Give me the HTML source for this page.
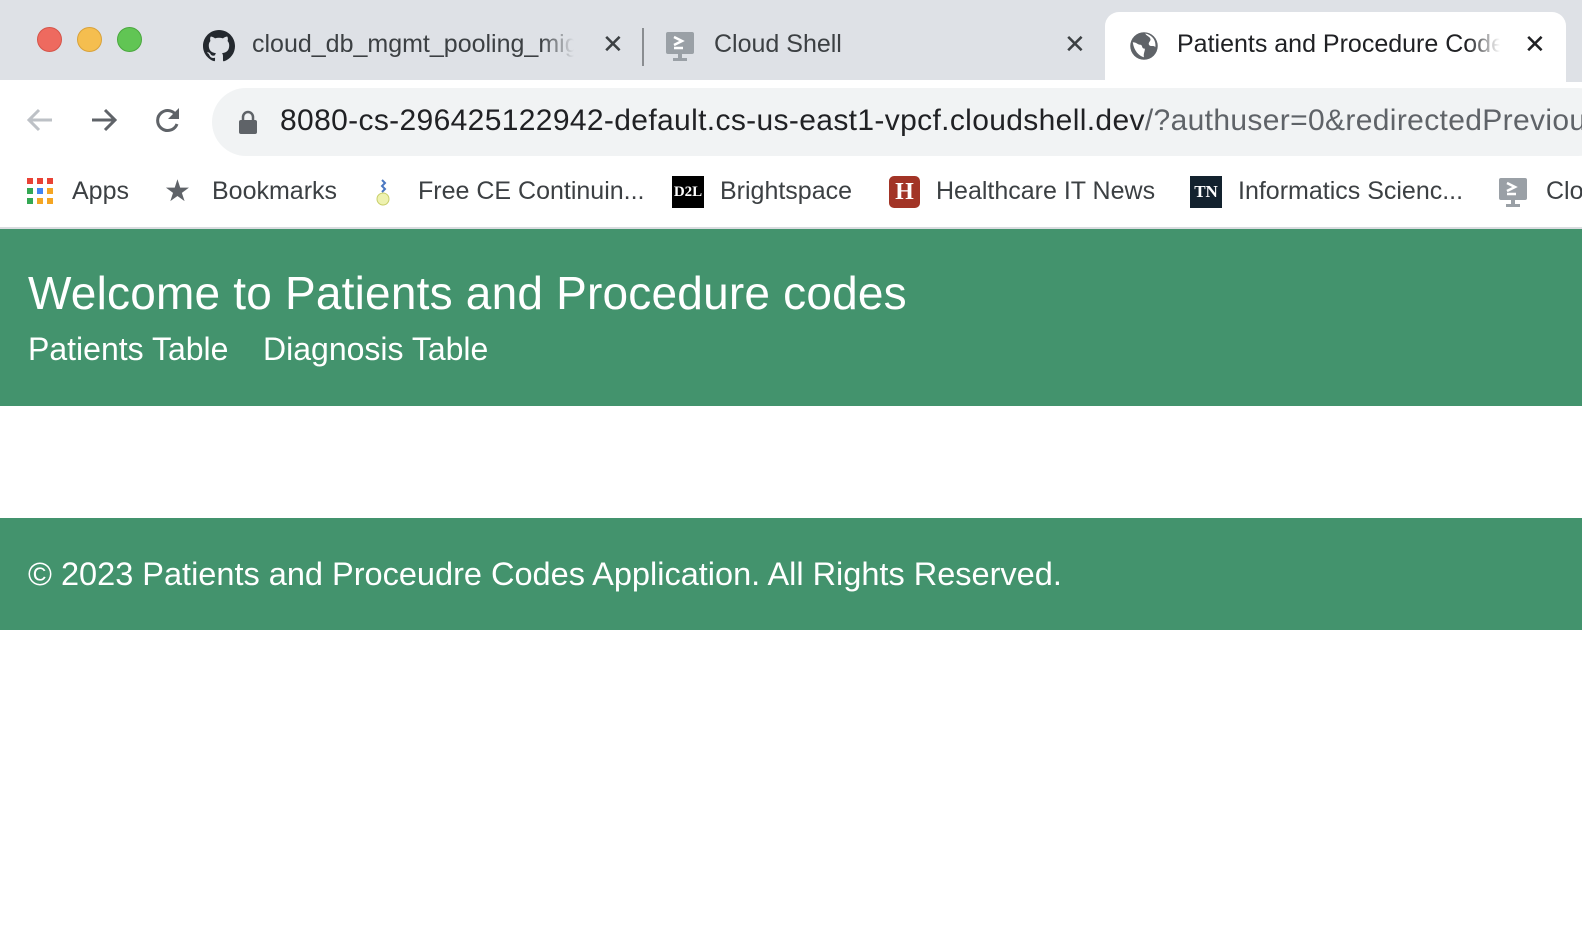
<!DOCTYPE html>
<html style="overflow:hidden"><head><meta charset="utf-8"><style>
*{margin:0;padding:0;box-sizing:border-box}
html,body{width:1582px;height:930px;overflow:hidden}
body{position:relative;background:#fff;font-family:"Liberation Sans",Arial,sans-serif}
#w{position:absolute;left:0;top:0;width:1582px;height:930px;overflow:hidden}
.a{position:absolute;white-space:nowrap}
.tabstrip{left:0;top:0;width:1582px;height:80px;background:#dee1e6}
.dot{width:25px;height:25px;border-radius:50%;top:27px}
.tt{font-size:25px;color:#3c4043;top:30px}
.x{font-size:26px;color:#3c4043;top:29px}
.bm{font-size:25px;color:#3c4043;top:177px}
.green{background:#43936d;left:0;width:1582px}
</style></head><body><div id="w">
<div class="a tabstrip"></div>
<div class="a dot" style="left:37px;background:#ee6a5f;border:1px solid #d55449"></div>
<div class="a dot" style="left:77px;background:#f5be4f;border:1px solid #d9a23a"></div>
<div class="a dot" style="left:117px;background:#61c554;border:1px solid #4aa83e"></div>
<svg class="a" style="left:203px;top:30px" width="32" height="32" viewBox="0 0 16 16"><path fill="#24292f" d="M8 0C3.58 0 0 3.58 0 8c0 3.54 2.29 6.530 5.47 7.59.4.07.55-.17.55-.38v-1.33c-2.23.48-2.7-1.07-2.7-1.070-.36-.92-.89-1.17-.89-1.17-.73-.5.05-.49.05-.49.8.06 1.23.83 1.23.83.72 1.22 1.87.87 2.33.66.07-.52.28-.87.5-1.07-1.78-.2-3.64-.89-3.64-3.95 0-.87.31-1.59.82-2.15-.08-.2-.36-1.02.08-2.12 0 0 .67-.21 2.2.82a7.6 7.6 0 0 1 4 0c1.53-1.04 2.2-.82 2.2-.82.44 1.1.16 1.92.08 2.12.51.56.82 1.27.82 2.15 0 3.07-1.87 3.75-3.65 3.95.29.25.54.73.54 1.48v2.2c0 .21.15.46.55.38A8 8 0 0 0 16 8c0-4.42-3.58-8-8-8z"/></svg>
<div class="a tt" style="left:252px;width:322px;overflow:hidden;-webkit-mask-image:linear-gradient(90deg,#000 90%,transparent)">cloud_db_mgmt_pooling_mig</div>
<div class="a x" style="left:602px">✕</div>
<div class="a" style="left:642px;top:28px;width:2px;height:38px;background:#8a8d91"></div>
<svg class="a" style="left:664px;top:31px" width="32" height="32" viewBox="0 0 32 32"><rect x="2" y="1" width="28" height="22" rx="2" fill="#9aa0a6"/><path d="M10 6l8 4-8 4M10 17h9" stroke="#fff" stroke-width="2.5" fill="none"/><rect x="14" y="23" width="4" height="4" fill="#9aa0a6"/><rect x="9" y="27" width="14" height="3" fill="#9aa0a6"/></svg>
<div class="a tt" style="left:714px">Cloud Shell</div>
<div class="a x" style="left:1064px">✕</div>
<div class="a" style="left:1105px;top:12px;width:461px;height:70px;background:#fff;border-radius:14px 14px 0 0"></div>
<div class="a" style="left:1566px;top:12px;width:20px;height:70px;background:#dee1e6;border-radius:14px 0 0 0"></div>
<svg class="a" style="left:1129px;top:31px" width="30" height="30" viewBox="0 0 24 24"><circle cx="12" cy="12" r="11" fill="#5f6368"/><path d="M3 9c3 0 4 2 6 2s1 3 3 3-1 4 0 7c-4-1-8-5-9-12zM13 2c1 2 3 2 4 4s-2 3-1 5 4 0 5 2c1-6-3-10-8-11z" fill="#fff"/></svg>
<div class="a tt" style="left:1177px;width:323px;overflow:hidden;color:#202124;-webkit-mask-image:linear-gradient(90deg,#000 90%,transparent)">Patients and Procedure Codes</div>
<div class="a x" style="left:1524px;color:#202124">✕</div>
<svg class="a" style="left:24px;top:104px" width="32" height="32" viewBox="0 0 32 32"><path d="M28 16H5M15 6L5 16l10 10" stroke="#bdc1c6" stroke-width="3" fill="none"/></svg>
<svg class="a" style="left:88px;top:104px" width="32" height="32" viewBox="0 0 32 32"><path d="M4 16h23M17 6l10 10-10 10" stroke="#5f6368" stroke-width="3" fill="none"/></svg>
<svg class="a" style="left:152px;top:104px" width="32" height="32" viewBox="0 0 32 32"><path d="M25 13A10 10 0 1 0 25 20" stroke="#5f6368" stroke-width="3" fill="none"/><path d="M27 4v11H16z" fill="#5f6368"/></svg>
<div class="a" style="left:212px;top:88px;width:1400px;height:68px;border-radius:34px;background:#f1f3f4"></div>
<svg class="a" style="left:238px;top:110px" width="20" height="24" viewBox="0 0 20 24"><path d="M5 10V7a5 5 0 0 1 10 0v3" stroke="#5f6368" stroke-width="2.5" fill="none"/><rect x="1" y="10" width="18" height="14" rx="2" fill="#5f6368"/></svg>
<div class="a" style="left:280px;top:104px;font-size:30px;letter-spacing:0.35px;color:#202124">8080-cs-296425122942-default.cs-us-east1-vpcf.cloudshell.dev<span style="color:#5f6368">/?authuser=0&amp;redirectedPreviously=true</span></div>
<svg class="a" style="left:27px;top:178px" width="26" height="26" viewBox="0 0 26 26"><rect x="0" y="0" width="6" height="6" fill="#e94235"/><rect x="10" y="0" width="6" height="6" fill="#e94235"/><rect x="20" y="0" width="6" height="6" fill="#e94235"/><rect x="0" y="10" width="6" height="6" fill="#34a853"/><rect x="10" y="10" width="6" height="6" fill="#4285f4"/><rect x="20" y="10" width="6" height="6" fill="#f5a623"/><rect x="0" y="20" width="6" height="6" fill="#34a853"/><rect x="10" y="20" width="6" height="6" fill="#f5a623"/><rect x="20" y="20" width="6" height="6" fill="#f5a623"/></svg>
<div class="a bm" style="left:72px">Apps</div>
<div class="a" style="left:164px;top:174px;font-size:30px;color:#5f6368">★</div>
<div class="a bm" style="left:212px">Bookmarks</div>
<svg class="a" style="left:373px;top:178px" width="20" height="28" viewBox="0 0 20 28"><circle cx="10" cy="21" r="6" fill="#eef2b0" stroke="#c9cf6b"/><path d="M9 2l3 3-3 3 3 3-3 3" stroke="#4a78c2" stroke-width="2" fill="none"/></svg>
<div class="a bm" style="left:418px">Free CE Continuin...</div>
<div class="a" style="left:672px;top:176px;width:32px;height:32px;background:#000;color:#fff;font:bold 15px 'Liberation Serif',serif;line-height:32px;text-align:center">D2L</div>
<div class="a bm" style="left:720px">Brightspace</div>
<div class="a" style="left:889px;top:176px;width:31px;height:32px;background:#a23426;border-radius:5px;color:#fff;font:bold 24px 'Liberation Serif',serif;line-height:32px;text-align:center">H</div>
<div class="a bm" style="left:936px">Healthcare IT News</div>
<div class="a" style="left:1190px;top:176px;width:32px;height:32px;background:#13222e;color:#fff;font:bold 17px 'Liberation Serif',serif;line-height:32px;text-align:center">TN</div>
<div class="a bm" style="left:1238px">Informatics Scienc...</div>
<svg class="a" style="left:1497px;top:177px" width="32" height="32" viewBox="0 0 32 32"><rect x="2" y="1" width="28" height="22" rx="2" fill="#9aa0a6"/><path d="M10 6l8 4-8 4M10 17h9" stroke="#fff" stroke-width="2.5" fill="none"/><rect x="14" y="23" width="4" height="4" fill="#9aa0a6"/><rect x="9" y="27" width="14" height="3" fill="#9aa0a6"/></svg>
<div class="a bm" style="left:1546px">Cloud Shell</div>
<div class="a" style="left:0;top:227px;width:1582px;height:2px;background:#dadce0"></div>
<div class="a green" style="top:229px;height:177px"></div>
<div class="a" style="left:28px;top:266px;font-size:46px;color:#fff;letter-spacing:0.2px">Welcome to Patients and Procedure codes</div>
<div class="a" style="left:28px;top:331px;font-size:32px;color:#fff">Patients Table</div>
<div class="a" style="left:263px;top:331px;font-size:32px;color:#fff">Diagnosis Table</div>
<div class="a green" style="top:518px;height:112px"></div>
<div class="a" style="left:28px;top:556px;font-size:32.5px;color:#fff">© 2023 Patients and Proceudre Codes Application. All Rights Reserved.</div>
</div></body></html>
